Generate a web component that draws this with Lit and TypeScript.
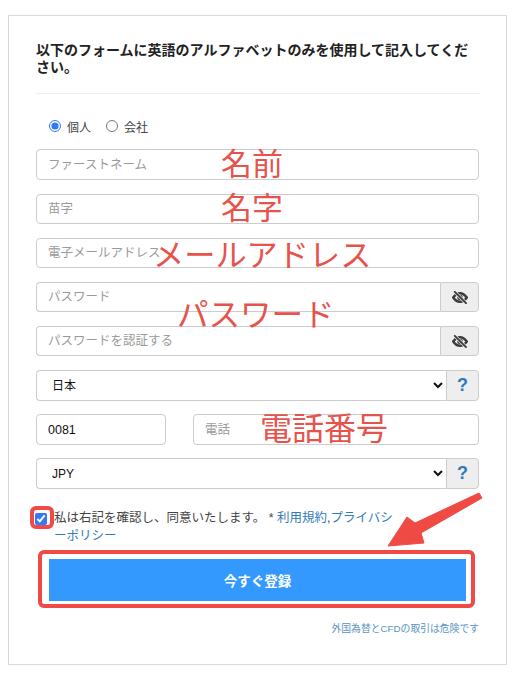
import { LitElement, html, css, svg } from "lit";
import { customElement } from "lit/decorators.js";

const eyeOff = svg`<svg class="eye" viewBox="0 0 20 16" width="16" height="13" aria-hidden="true">
  <path d="M1.5 8C4 4.4 6.8 2.6 10 2.6s6 1.8 8.5 5.4c-2.5 3.6-5.3 5.4-8.5 5.4S4 11.6 1.5 8Z" fill="none" stroke="#3c3c3c" stroke-width="3"/>
  <circle cx="10" cy="8" r="3.4" fill="#3c3c3c"/>
  <path d="M3.5 1 17.5 15" stroke="#eee" stroke-width="4"/>
  <path d="M3.5 1 17.5 15" stroke="#3c3c3c" stroke-width="2.4" stroke-linecap="round"/>
</svg>`;

@customElement("app-root")
export class AppRoot extends LitElement {
  static styles = css`
    :host {
      display: block;
      position: relative;
      width: 518px;
      height: 676px;
      overflow: hidden;
      background: #fff;
      font-family: "Liberation Sans", "Noto Sans CJK JP", sans-serif;
      color: #333;
    }
    .card {
      box-sizing: border-box;
      width: 499px;
      height: 650px;
      margin: 15px 0 0 8px;
      padding: 26px 27px 0 27px;
      border: 1px solid #d9d9d9;
    }
    h1 {
      margin: 0;
      font-size: 14px;
      line-height: 17px;
      font-weight: 700;
      color: #222;
      width: 444px;
    }
    hr {
      margin: 17px 0 0;
      width: 444px;
      border: 0;
      border-top: 1px solid #eee;
    }
    .radios {
      display: flex;
      align-items: center;
      height: 20px;
      margin: 22px 0 13px 13px;
      font-size: 12px;
      color: #444;
    }
    .radios label { display: flex; align-items: center; gap: 6px; margin-right: 15px; }
    .radios input { width: 12px; height: 12px; margin: 0; accent-color: #3478f6; }
    .form { display: flex; flex-direction: column; gap: 14px; width: 443px; }
    input.f, select {
      box-sizing: border-box;
      height: 30px;
      width: 100%;
      min-width: 0;
      border: 1px solid #ccc;
      border-radius: 4px;
      background: #fff;
      padding: 0 11px;
      font: 12.5px "Liberation Sans", "Noto Sans CJK JP", sans-serif;
      color: #111;
      outline: none;
    }
    input.first { height: 31px; }
    input.f::placeholder { color: #9a9a9a; opacity: 1; }
    select { font-size: 12px; height: 31px; }
    .tall { margin-bottom: -1px; }
    .tall input.f { height: 31px; }
    .group { display: flex; }
    .group input.f, .group select {
      flex: 1;
      border-radius: 4px 0 0 4px;
      border-right: 0;
    }
    .addon {
      box-sizing: border-box;
      flex: none;
      display: flex;
      align-items: center;
      justify-content: center;
      border: 1px solid #ccc;
      border-radius: 0 4px 4px 0;
      background: #eee;
    }
    .addon.eyebox { width: 39px; }
    .addon.help {
      width: 33px;
      font-size: 18px;
      font-weight: 700;
      color: #337ab7;
    }
    .phone { display: grid; grid-template-columns: 130px 1fr; gap: 27px; }
    .agree {
      display: flex;
      align-items: flex-start;
      margin: 20px 0 0 -1px;
      font-size: 12.5px;
      line-height: 18px;
      color: #444;
    }
    .agree input {
      flex: none;
      width: 12px;
      height: 12px;
      margin: 4px 7px 0 0;
      accent-color: #3478f6;
    }
    a { color: #337ab7; text-decoration: none; }
    .submit {
      display: block;
      box-sizing: border-box;
      width: 417px;
      height: 42px;
      margin: 14px 0 0 13px;
      border: 0;
      background: #3399ff;
      color: #fff;
      font: 700 13.5px "Liberation Sans", "Noto Sans CJK JP", sans-serif;
    }
    .risk {
      margin: 21px 0 0;
      text-align: right;
      font-size: 9.8px;
      line-height: 14px;
      width: 443px;
    }
    .risk a { color: #5b93c4; }
    .note {
      position: absolute;
      color: #e8524c;
      font-size: 31px;
      line-height: 36px;
      white-space: nowrap;
    }
    .n1 { left: 221px; top: 147px; }
    .n2 { left: 221px; top: 191px; }
    .n3 { left: 153px; top: 238px; font-size: 31.2px; }
    .n4 { left: 177px; top: 297px; font-size: 31.5px; }
    .n5 { left: 260px; top: 411px; font-size: 32px; }
    .mark {
      position: absolute;
      box-sizing: border-box;
      border: 4px solid #ef4a45;
      border-radius: 6px;
    }
    .m1 { left: 30px; top: 506px; width: 24px; height: 23px; }
    .m2 { left: 38px; top: 550px; width: 437px; height: 58px; }
    .arrow { position: absolute; left: 0; top: 0; pointer-events: none; }
  `;

  render() {
    return html`
      <div class="card">
        <h1>以下のフォームに英語のアルファベットのみを使用して記入してください。</h1>
        <hr />
        <div class="radios">
          <label><input type="radio" name="t" checked />個人</label>
          <label><input type="radio" name="t" />会社</label>
        </div>
        <div class="form">
          <input class="f first" placeholder="ファーストネーム" />
          <input class="f" placeholder="苗字" />
          <input class="f" placeholder="電子メールアドレス" />
          <div class="group">
            <input class="f" placeholder="パスワード" />
            <span class="addon eyebox">${eyeOff}</span>
          </div>
          <div class="group">
            <input class="f" placeholder="パスワードを認証する" />
            <span class="addon eyebox">${eyeOff}</span>
          </div>
          <div class="group tall">
            <select><option>日本</option></select>
            <span class="addon help">?</span>
          </div>
          <div class="phone tall">
            <input class="f" value="0081" />
            <input class="f" placeholder="電話" />
          </div>
          <div class="group">
            <select><option>JPY</option></select>
            <span class="addon help">?</span>
          </div>
        </div>
        <label class="agree">
          <input type="checkbox" checked />
          <span>私は右記を確認し、同意いたします。 * <a href="#">利用規約</a>,<a href="#">プライバシ<br />ーポリシー</a></span>
        </label>
        <button class="submit">今すぐ登録</button>
        <p class="risk"><a href="#">外国為替とCFDの取引は危険です</a></p>
      </div>

      <span class="note n1">名前</span>
      <span class="note n2">名字</span>
      <span class="note n3">メールアドレス</span>
      <span class="note n4">パスワード</span>
      <span class="note n5">電話番号</span>
      <span class="mark m1"></span>
      <span class="mark m2"></span>
      <svg class="arrow" width="518" height="676" viewBox="0 0 518 676" aria-hidden="true">
        <path d="M479 493 482 498 421 533 424 543 388 546 407 517 415 523Z" fill="#f04a44" stroke="#f04a44" stroke-width="1" stroke-linejoin="round"/>
      </svg>
    `;
  }
}
